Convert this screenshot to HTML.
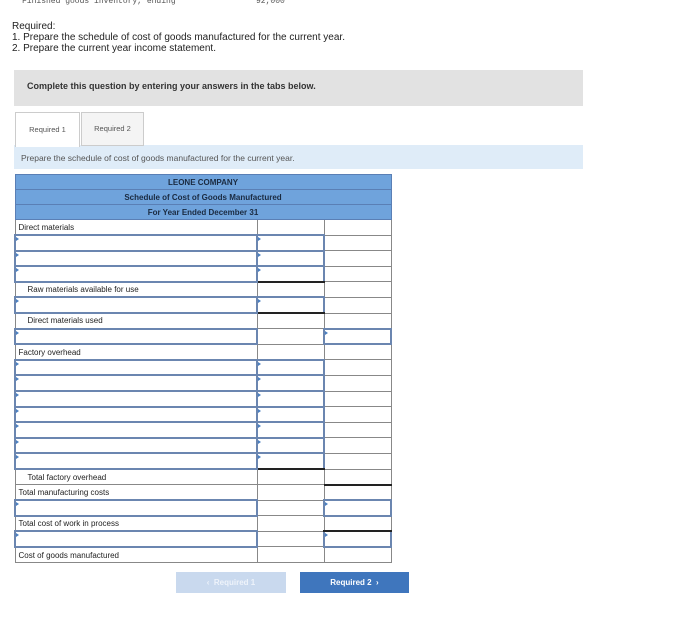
<!DOCTYPE html><html><head><style>
body{margin:0;background:#fff;width:700px;height:621px;position:relative;font-family:"Liberation Sans",sans-serif;color:#222;overflow:hidden}
.a{position:absolute}
table{position:absolute;left:14px;top:174px;border-collapse:collapse;width:376px;font-size:8px;table-layout:fixed}
tr{height:15.6px}
td{border:1px solid #888;height:1px;line-height:9px;padding:0 3px;white-space:nowrap;overflow:hidden}
tr.h{height:15px}
.h td{background:#6fa3dc;color:#1a2a40;text-align:center;font-weight:bold;border-color:#5a7fb5}
td.i{border:2px solid #6b86b0;background:#fff;position:relative}
td.i:before{content:"";position:absolute;left:0;top:1px;border-left:3px solid #4a7fc0;border-top:2px solid transparent;border-bottom:2px solid transparent}
td.bb{border-bottom:2px solid #222}
.ind{padding-left:12px}
</style></head><body>
<div class="a" style="left:22px;top:-3px;font-family:'Liberation Mono',monospace;font-size:8px;color:#555">Finished goods inventory, ending</div>
<div class="a" style="left:256px;top:-3px;font-family:'Liberation Mono',monospace;font-size:8px;color:#555">92,000</div>
<div class="a" style="left:12px;top:21px;font-size:10px;line-height:11px;color:#222">Required:<br>1. Prepare the schedule of cost of goods manufactured for the current year.<br>2. Prepare the current year income statement.</div>
<div class="a" style="left:14px;top:70px;width:569px;height:36px;background:#e2e2e2"></div>
<div class="a" style="left:27px;top:81px;font-size:9px;font-weight:bold;color:#333">Complete this question by entering your answers in the tabs below.</div>
<div class="a" style="left:14px;top:145px;width:569px;height:24px;background:#dfecf8"></div>
<div class="a" style="left:15px;top:112px;width:63px;height:34px;background:#fff;border:1px solid #ccc;border-bottom:none;font-size:7.5px;color:#555;text-align:center;line-height:34px">Required 1</div>
<div class="a" style="left:81px;top:112px;width:61px;height:32px;background:#f4f4f4;border:1px solid #ccc;font-size:7.5px;color:#555;text-align:center;line-height:32px">Required 2</div>
<div class="a" style="left:21px;top:153px;font-size:8.5px;color:#555">Prepare the schedule of cost of goods manufactured for the current year.</div>
<table>
<colgroup><col style="width:242px"><col style="width:67px"><col style="width:67px"></colgroup>
<tr class="h"><td colspan="3">LEONE COMPANY</td></tr>
<tr class="h"><td colspan="3">Schedule of Cost of Goods Manufactured</td></tr>
<tr class="h"><td colspan="3">For Year Ended December 31</td></tr>
<tr><td>Direct materials</td><td></td><td></td></tr>
<tr><td class="i"></td><td class="i"></td><td></td></tr>
<tr><td class="i"></td><td class="i"></td><td></td></tr>
<tr><td class="i"></td><td class="i bb"></td><td></td></tr>
<tr><td class="ind">Raw materials available for use</td><td></td><td></td></tr>
<tr><td class="i"></td><td class="i bb"></td><td></td></tr>
<tr><td class="ind">Direct materials used</td><td></td><td></td></tr>
<tr><td class="i"></td><td></td><td class="i"></td></tr>
<tr><td>Factory overhead</td><td></td><td></td></tr>
<tr><td class="i"></td><td class="i"></td><td></td></tr>
<tr><td class="i"></td><td class="i"></td><td></td></tr>
<tr><td class="i"></td><td class="i"></td><td></td></tr>
<tr><td class="i"></td><td class="i"></td><td></td></tr>
<tr><td class="i"></td><td class="i"></td><td></td></tr>
<tr><td class="i"></td><td class="i"></td><td></td></tr>
<tr><td class="i"></td><td class="i bb"></td><td></td></tr>
<tr><td class="ind">Total factory overhead</td><td></td><td class="bb"></td></tr>
<tr><td>Total manufacturing costs</td><td></td><td></td></tr>
<tr><td class="i"></td><td></td><td class="i"></td></tr>
<tr><td>Total cost of work in process</td><td></td><td class="bb"></td></tr>
<tr><td class="i"></td><td></td><td class="i"></td></tr>
<tr><td>Cost of goods manufactured</td><td></td><td></td></tr>
</table>
<div class="a" style="left:176px;top:572px;width:110px;height:21px;background:#c9d9ee;color:#eef3fa;font-size:8px;font-weight:bold;text-align:center;line-height:21px">&lsaquo;&nbsp; Required 1</div>
<div class="a" style="left:300px;top:572px;width:109px;height:21px;background:#3f76bd;color:#fff;font-size:8px;font-weight:bold;text-align:center;line-height:21px">Required 2 &nbsp;&rsaquo;</div>
</body></html>
